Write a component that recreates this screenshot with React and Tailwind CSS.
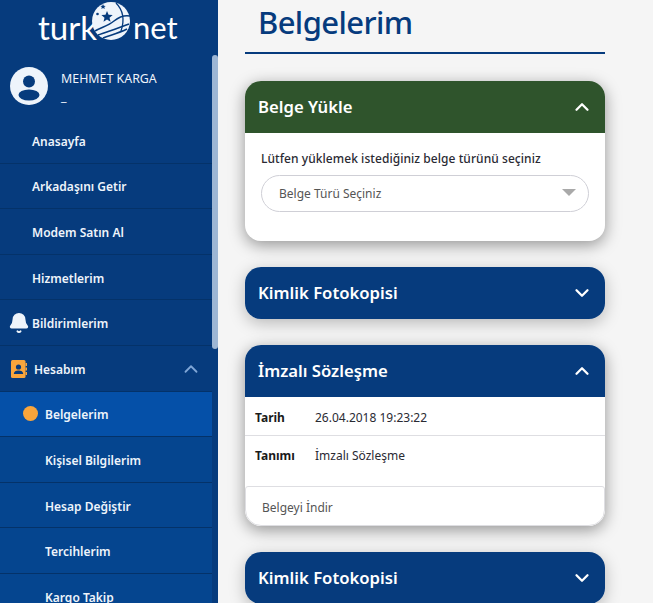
import { Bell, ChevronUp, ChevronDown } from "lucide-react";

const font = "font-['Noto_Sans','Open_Sans',sans-serif]";

function Logo() {
  return (
    <div className="flex items-start h-[44px] pl-[38px]">
      <span className="w-[54px] mt-[11px] font-['Lato',sans-serif] text-[33px] leading-[32px] text-white">turk</span>
      <svg width="38" height="38" viewBox="0 0 38 38" className="mt-[2px]">
        <circle cx="19" cy="19" r="19" fill="#eef4fb" />
        <path d="M3 29C10 25 16 24 22 19C27 15 33 13 38 14" stroke="#063b7d" strokeWidth="1.5" fill="none" />
        <path d="M6 33C14 30 24 27 37 22" stroke="#063b7d" strokeWidth="1.6" fill="none" />
        <path d="M11 36C19 33 27 31 35 27" stroke="#063b7d" strokeWidth="1.6" fill="none" />
        <path d="M24 1C31 8 33 17 29 29" stroke="#063b7d" strokeWidth="1.3" fill="none" />
        <path d="M15 9l1.6 3.8 4.1.3-3.2 2.6 1.1 4-3.6-2.2-3.5 2.2 1-4-3.1-2.6 4.1-.3z" fill="#063b7d" />
        <path d="M11 2l.8 1.7 1.9.2-1.4 1.2.4 1.9-1.7-1-1.6 1 .4-1.9-1.4-1.2 1.9-.2z" fill="#063b7d" />
        <circle cx="5.5" cy="12" r="1.3" fill="#063b7d" />
      </svg>
      <span className="ml-[3px] mt-[11px] font-['Lato',sans-serif] text-[31px] leading-[32px] text-white">net</span>
    </div>
  );
}

function NavItem({ label, icon, sub, active, right, iconWidth = "w-[23px]" }) {
  return (
    <div className={`flex items-center h-[45.6px] pt-[3px] border-b border-[#043269] text-[12px] font-semibold text-[#eef4fb] ${active ? "bg-[#0550a8]" : sub ? "bg-[#05458f]" : "bg-[#063b7d]"} ${sub ? "pl-[23px]" : "pl-[9px]"}`}>
      <span className={`flex items-center ${sub ? "w-[22px]" : iconWidth}`}>{icon}</span>
      <span>{label}</span>
      {right}
    </div>
  );
}

function AccordionHead({ title, open, green }) {
  return (
    <div className={`flex items-center justify-between h-[52px] pl-[13px] pr-[12px] ${green ? "bg-[#2f542c]" : "bg-[#063b7d]"}`}>
      <span className="text-[16.7px] -mt-[1px] font-semibold text-white">{title}</span>
      {open ? <ChevronUp size={22} strokeWidth={2.5} className="text-white" /> : <ChevronDown size={22} strokeWidth={2.5} className="text-white" />}
    </div>
  );
}

export default function App() {
  return (
    <div className={`flex w-[653px] h-[603px] overflow-hidden bg-[#f5f5f5] ${font}`}>
      {/* Sidebar */}
      <aside className="relative w-[218px] h-[603px] shrink-0 bg-[#063b7d] overflow-hidden">
        <div className="w-[212px]">
          <Logo />
          <div className="flex items-start h-[74px] pl-[10px] pt-[23px]">
            <svg width="38" height="38" viewBox="0 0 38 38" className="shrink-0">
              <circle cx="19" cy="19" r="19" fill="#eef4fb" />
              <circle cx="19" cy="14.5" r="6" fill="#063b7d" />
              <ellipse cx="19" cy="28" rx="10.5" ry="5.5" fill="#063b7d" />
            </svg>
            <div className="ml-[13px] text-[12.4px] leading-[18px] text-[#eef4fb]">
              <div className="mt-[3px]">MEHMET KARGA</div>
              <div>_</div>
            </div>
          </div>
          <NavItem label="Anasayfa" />
          <NavItem label="Arkadaşını Getir" />
          <NavItem label="Modem Satın Al" />
          <NavItem label="Hizmetlerim" />
          <NavItem label="Bildirimlerim" icon={<Bell size={22} fill="#eef4fb" className="-ml-[1px] -mt-[2px] text-[#eef4fb]" />} />
          <NavItem
            label="Hesabım"
            iconWidth="w-[25px]"
            icon={
              <svg width="16" height="18" viewBox="0 0 16 18" className="ml-[2px] -mt-[2px]">
                <rect x="0" y="0" width="14.5" height="18" rx="1.5" fill="#f9a53c" />
                <rect x="14.5" y="3" width="1.5" height="3" fill="#f9a53c" />
                <rect x="14.5" y="7.5" width="1.5" height="3" fill="#f9a53c" />
                <rect x="14.5" y="12" width="1.5" height="3" fill="#f9a53c" />
                <circle cx="7.5" cy="7" r="2.6" fill="#063b7d" />
                <path d="M2.8 14c0-2.6 2-3.6 4.7-3.6s4.7 1 4.7 3.6z" fill="#063b7d" />
              </svg>
            }
            right={<ChevronUp size={22} strokeWidth={2} className="ml-auto mr-[10px] -mt-[2px] text-[#7fa6d6]" />}
          />
          <NavItem sub active label="Belgelerim" icon={<span className="w-[15px] h-[15px] -mt-[3px] rounded-full bg-[#f9a53c]" />} />
          <NavItem sub label="Kişisel Bilgilerim" />
          <NavItem sub label="Hesap Değiştir" />
          <NavItem sub label="Tercihlerim" />
          <NavItem sub label="Kargo Takip" />
        </div>
        <div className="absolute right-0 top-[55px] w-[6px] h-[294px] rounded-[3px] bg-[#9db6d4]" />
      </aside>

      {/* Main */}
      <main className="w-[360px] ml-[27px] shrink-0">
        <div className="h-[54px] border-b-2 border-[#063b7d] pl-[13px]">
          <h1 className="text-[31px] leading-[44px] font-medium tracking-[-0.6px] text-[#063b7d]">Belgelerim</h1>
        </div>

        <div className="mt-[27px] rounded-[16px] overflow-hidden bg-white shadow-[0_4px_16px_rgba(0,0,0,0.4)]">
          <AccordionHead title="Belge Yükle" open green />
          <div className="h-[108px] px-[16px] pt-[17px]">
            <div className="text-[12px] leading-[18px] font-medium tracking-[0.06px] text-[#2a2a33]">Lütfen yüklemek istediğiniz belge türünü seçiniz</div>
            <div className="relative flex items-center h-[37px] mt-[7px] pl-[17px] rounded-full border border-[#cfcfd6] text-[12px] text-[#555]">
              Belge Türü Seçiniz
              <span className="absolute right-[12px] top-[13px] w-0 h-0 border-x-[7px] border-x-transparent border-t-[7px] border-t-[#a9a9a9]" />
            </div>
          </div>
        </div>

        <div className="mt-[26px] rounded-[16px] overflow-hidden shadow-[0_4px_16px_rgba(0,0,0,0.25)]">
          <AccordionHead title="Kimlik Fotokopisi" />
        </div>

        <div className="mt-[26px] rounded-[16px] overflow-hidden bg-white shadow-[0_4px_16px_rgba(0,0,0,0.4)]">
          <AccordionHead title="İmzalı Sözleşme" open />
          <div className="flex items-center h-[39px] pt-[3px] pl-[10px] border-b border-[#dedee2] text-[12px] text-[#2a2a33]">
            <span className="w-[60px] font-bold text-[#1a1a1a]">Tarih</span>
            <span>26.04.2018 19:23:22</span>
          </div>
          <div className="flex items-start h-[50px] pt-[11px] pl-[10px] text-[12px] leading-[18px] text-[#2a2a33]">
            <span className="w-[60px] font-bold text-[#1a1a1a]">Tanımı</span>
            <span>İmzalı Sözleşme</span>
          </div>
          <div className="flex items-center h-[40px] pt-[3px] pl-[16px] rounded-b-[16px] border border-[#dedee2] rounded-t-[3px] text-[12px] text-[#555]">Belgeyi İndir</div>
        </div>

        <div className="mt-[26px] rounded-[16px] overflow-hidden shadow-[0_4px_16px_rgba(0,0,0,0.25)]">
          <AccordionHead title="Kimlik Fotokopisi" />
        </div>
      </main>
    </div>
  );
}
